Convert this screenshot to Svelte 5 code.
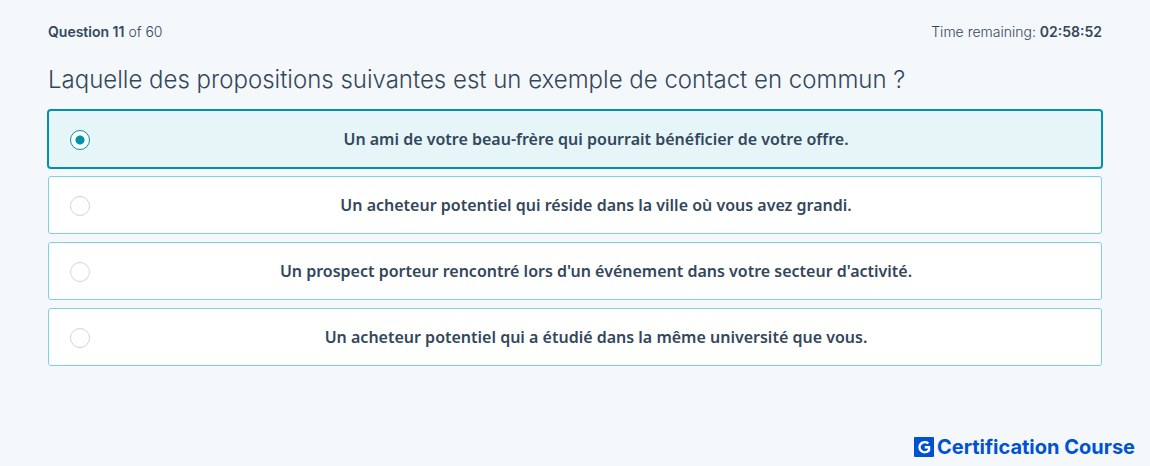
<script lang="ts">
  const options = [
    "Un ami de votre beau-frère qui pourrait bénéficier de votre offre.",
    "Un acheteur potentiel qui réside dans la ville où vous avez grandi.",
    "Un prospect porteur rencontré lors d'un événement dans votre secteur d'activité.",
    "Un acheteur potentiel qui a étudié dans la même université que vous.",
  ];

  let selected = $state(0);
</script>

<main class="exam">
  <header class="status">
    <span><strong>Question 11</strong> of 60</span>
    <span>Time remaining: <strong>02:58:52</strong></span>
  </header>

  <h1 class="question" id="question">
    Laquelle des propositions suivantes est un exemple de contact en commun ?
  </h1>

  <div class="options" role="radiogroup" aria-labelledby="question">
    {#each options as option, i}
      <label class="option" class:selected={selected === i}>
        <input type="radio" name="answer" value={i} bind:group={selected} />
        <span class="option-text">{option}</span>
      </label>
    {/each}
  </div>
</main>

<footer class="brand">
  <svg class="brand-mark" viewBox="0 0 20 20" aria-hidden="true">
    <rect width="20" height="20" rx="1" fill="#0052d4" />
    <path
      d="M14.4 6.4A5.4 5 0 1 0 15 13.4V10.2H10.8"
      fill="none"
      stroke="#fff"
      stroke-width="2.4"
    />
  </svg>
  <span>Certification Course</span>
</footer>

<style>
  :global(body) {
    background: #f5f8fb;
    color: #33475b;
    font-family: Inter, "Liberation Sans", sans-serif;
  }
  .exam {
    padding: 22px 48px 0;
  }
  .status {
    display: flex;
    justify-content: space-between;
    font-size: 14px;
    font-weight: 300;
    line-height: 20px;
  }
  .status strong {
    font-weight: 600;
  }
  .question {
    margin: 20px 0 12px;
    font-size: 24px;
    font-weight: 300;
    line-height: 36px;
  }
  .options {
    display: flex;
    flex-direction: column;
    gap: 8px;
  }
  .option {
    display: flex;
    align-items: center;
    box-sizing: border-box;
    min-height: 58px;
    padding-left: 21px;
    border: 1px solid #7fd1de;
    border-radius: 3px;
    background: #fff;
    cursor: pointer;
  }
  .option.selected {
    border-color: #0091ae;
    background: #e5f5f8;
    box-shadow: 0 0 0 1px #0091ae;
  }
  .option input {
    appearance: none;
    flex: none;
    width: 20px;
    height: 20px;
    margin: 1px 1px 0 0;
    border: 1px solid #cbd6e2;
    border-radius: 50%;
    background: #fff;
    cursor: pointer;
  }
  .option input:checked {
    border-color: #0091ae;
    background: radial-gradient(circle, #0091ae 4px, #fff 5px);
  }
  .option-text {
    flex: 1;
    font-family: "Noto Sans", "Open Sans", sans-serif;
    font-size: 16px;
    font-weight: 600;
    line-height: 24px;
    text-align: center;
  }
  .brand {
    display: flex;
    align-items: center;
    justify-content: flex-end;
    gap: 3px;
    padding: 69px 15px 8px;
    color: #0052d4;
    font-size: 20px;
    font-weight: 700;
    line-height: 24px;
  }
  .brand-mark {
    width: 20px;
    height: 20px;
  }
</style>
